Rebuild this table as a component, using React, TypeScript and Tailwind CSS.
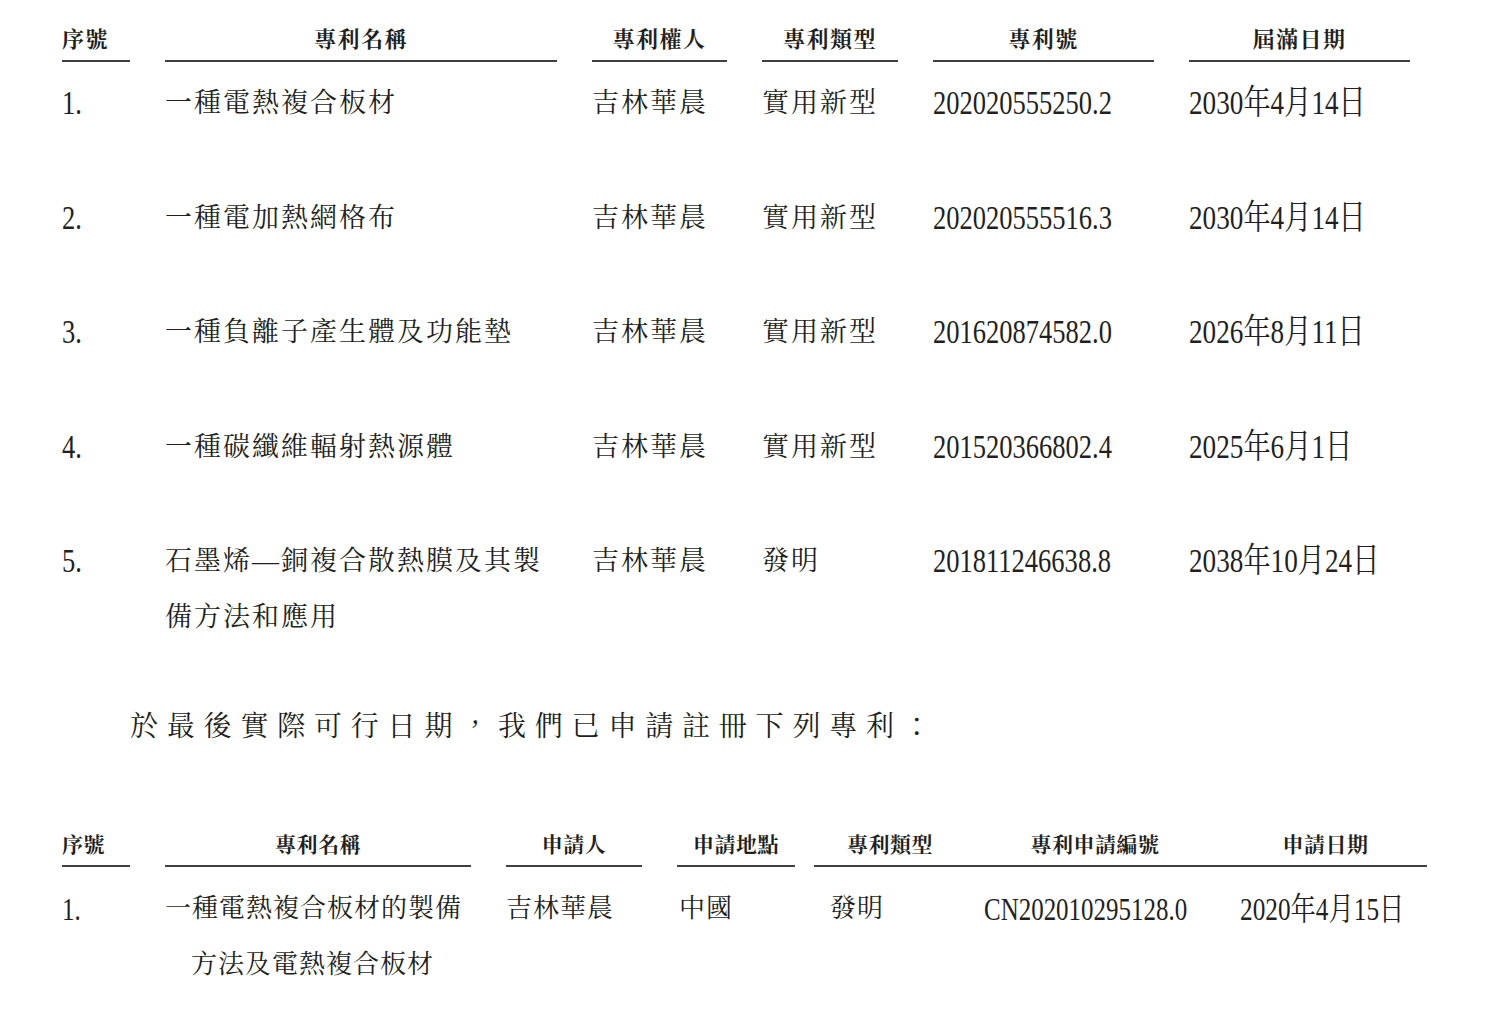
const serif = "font-['Liberation_Serif','Noto_Serif_CJK_TC','Noto_Sans_CJK_TC',serif]";

type Patent = {
  no: string;
  name: string[];
  owner: string;
  kind: string;
  number: string;
  expiry: string;
};

const granted: Patent[] = [
  { no: "1.", name: ["一種電熱複合板材"], owner: "吉林華晨", kind: "實用新型", number: "202020555250.2", expiry: "2030年4月14日" },
  { no: "2.", name: ["一種電加熱網格布"], owner: "吉林華晨", kind: "實用新型", number: "202020555516.3", expiry: "2030年4月14日" },
  { no: "3.", name: ["一種負離子產生體及功能墊"], owner: "吉林華晨", kind: "實用新型", number: "201620874582.0", expiry: "2026年8月11日" },
  { no: "4.", name: ["一種碳纖維輻射熱源體"], owner: "吉林華晨", kind: "實用新型", number: "201520366802.4", expiry: "2025年6月1日" },
  { no: "5.", name: ["石墨烯—銅複合散熱膜及其製", "備方法和應用"], owner: "吉林華晨", kind: "發明", number: "201811246638.8", expiry: "2038年10月24日" },
];

function HeadCell({ className, children }: { className: string; children: React.ReactNode }) {
  return (
    <div className={`shrink-0 border-b-2 border-[#3f3f3f] pt-[26px] pb-[6px] font-bold leading-[28px] ${className}`}>
      {children}
    </div>
  );
}

export default function App() {
  return (
    <div className={`min-h-screen w-[1486px] bg-white text-[#231f20] ${serif}`}>
      {/* granted patents */}
      <div className="pl-[62px]">
        <div className="flex gap-[35px] text-[22px] tracking-[1.5px]">
          <HeadCell className="w-[68px]">序號</HeadCell>
          <HeadCell className="w-[392px] text-center">專利名稱</HeadCell>
          <HeadCell className="w-[135px] text-center">專利權人</HeadCell>
          <HeadCell className="w-[136px] text-center">專利類型</HeadCell>
          <HeadCell className="w-[221px] text-center">專利號</HeadCell>
          <HeadCell className="w-[221px] text-center">屆滿日期</HeadCell>
        </div>

        {granted.map((p) => (
          <div key={p.no} className="flex gap-[35px] pt-[13px] pb-[45.5px] leading-[56px]">
            <div className="w-[68px] shrink-0 whitespace-nowrap">
              <div className="w-max origin-left scale-x-[0.78] text-[34px]">{p.no}</div>
            </div>
            <div className="w-[392px] shrink-0 whitespace-nowrap text-[27px] tracking-[2px]">
              {p.name.map((line) => (
                <div key={line}>{line}</div>
              ))}
            </div>
            <div className="w-[135px] shrink-0 whitespace-nowrap text-[27px] tracking-[2px]">{p.owner}</div>
            <div className="w-[136px] shrink-0 whitespace-nowrap text-[27px] tracking-[2px]">{p.kind}</div>
            <div className="w-[221px] shrink-0 whitespace-nowrap">
              <div className="w-max origin-left scale-x-[0.78] text-[34px]">{p.number}</div>
            </div>
            <div className="w-[221px] shrink-0 whitespace-nowrap">
              <div className="w-max origin-left scale-x-[0.8] text-[34px]">{p.expiry}</div>
            </div>
          </div>
        ))}
      </div>

      <p className="mt-[8.5px] pl-[130px] text-[28px] leading-[56px] tracking-[8.8px] whitespace-nowrap">
        於最後實際可行日期，我們已申請註冊下列專利：
      </p>

      {/* pending applications */}
      <div className="mt-[50px] pl-[62px]">
        <div className="flex text-[21px] tracking-[0.5px]">
          <HeadCell className="w-[68px]">序號</HeadCell>
          <HeadCell className="ml-[35px] w-[306px] text-center">專利名稱</HeadCell>
          <HeadCell className="ml-[35px] w-[136px] text-center">申請人</HeadCell>
          <HeadCell className="ml-[35px] w-[118px] text-center">申請地點</HeadCell>
          <HeadCell className="ml-[19px] w-[152px] text-center">專利類型</HeadCell>
          <HeadCell className="w-[258px] text-center">專利申請編號</HeadCell>
          <HeadCell className="w-[203px] text-center">申請日期</HeadCell>
        </div>

        <div className="flex pt-[14px] leading-[56px]">
          <div className="w-[68px] shrink-0 whitespace-nowrap">
            <div className="w-max origin-left scale-x-[0.78] text-[32px]">1.</div>
          </div>
          <div className="ml-[35px] w-[306px] shrink-0 whitespace-nowrap text-[26px] tracking-[1px]">
            <div>一種電熱複合板材的製備</div>
            <div className="pl-[26px]">方法及電熱複合板材</div>
          </div>
          <div className="ml-[35px] w-[136px] shrink-0 whitespace-nowrap text-[26px] tracking-[1px]">吉林華晨</div>
          <div className="ml-[35px] w-[118px] shrink-0 whitespace-nowrap pl-[2px] text-[26px] tracking-[1px]">中國</div>
          <div className="ml-[19px] w-[152px] shrink-0 whitespace-nowrap pl-[16px] text-[26px] tracking-[1px]">發明</div>
          <div className="w-[258px] shrink-0 whitespace-nowrap pl-[18px]">
            <div className="w-max origin-left scale-x-[0.78] text-[32px]">CN202010295128.0</div>
          </div>
          <div className="w-[203px] shrink-0 whitespace-nowrap pl-[16px]">
            <div className="w-max origin-left scale-x-[0.79] text-[32px]">2020年4月15日</div>
          </div>
        </div>
      </div>
    </div>
  );
}
